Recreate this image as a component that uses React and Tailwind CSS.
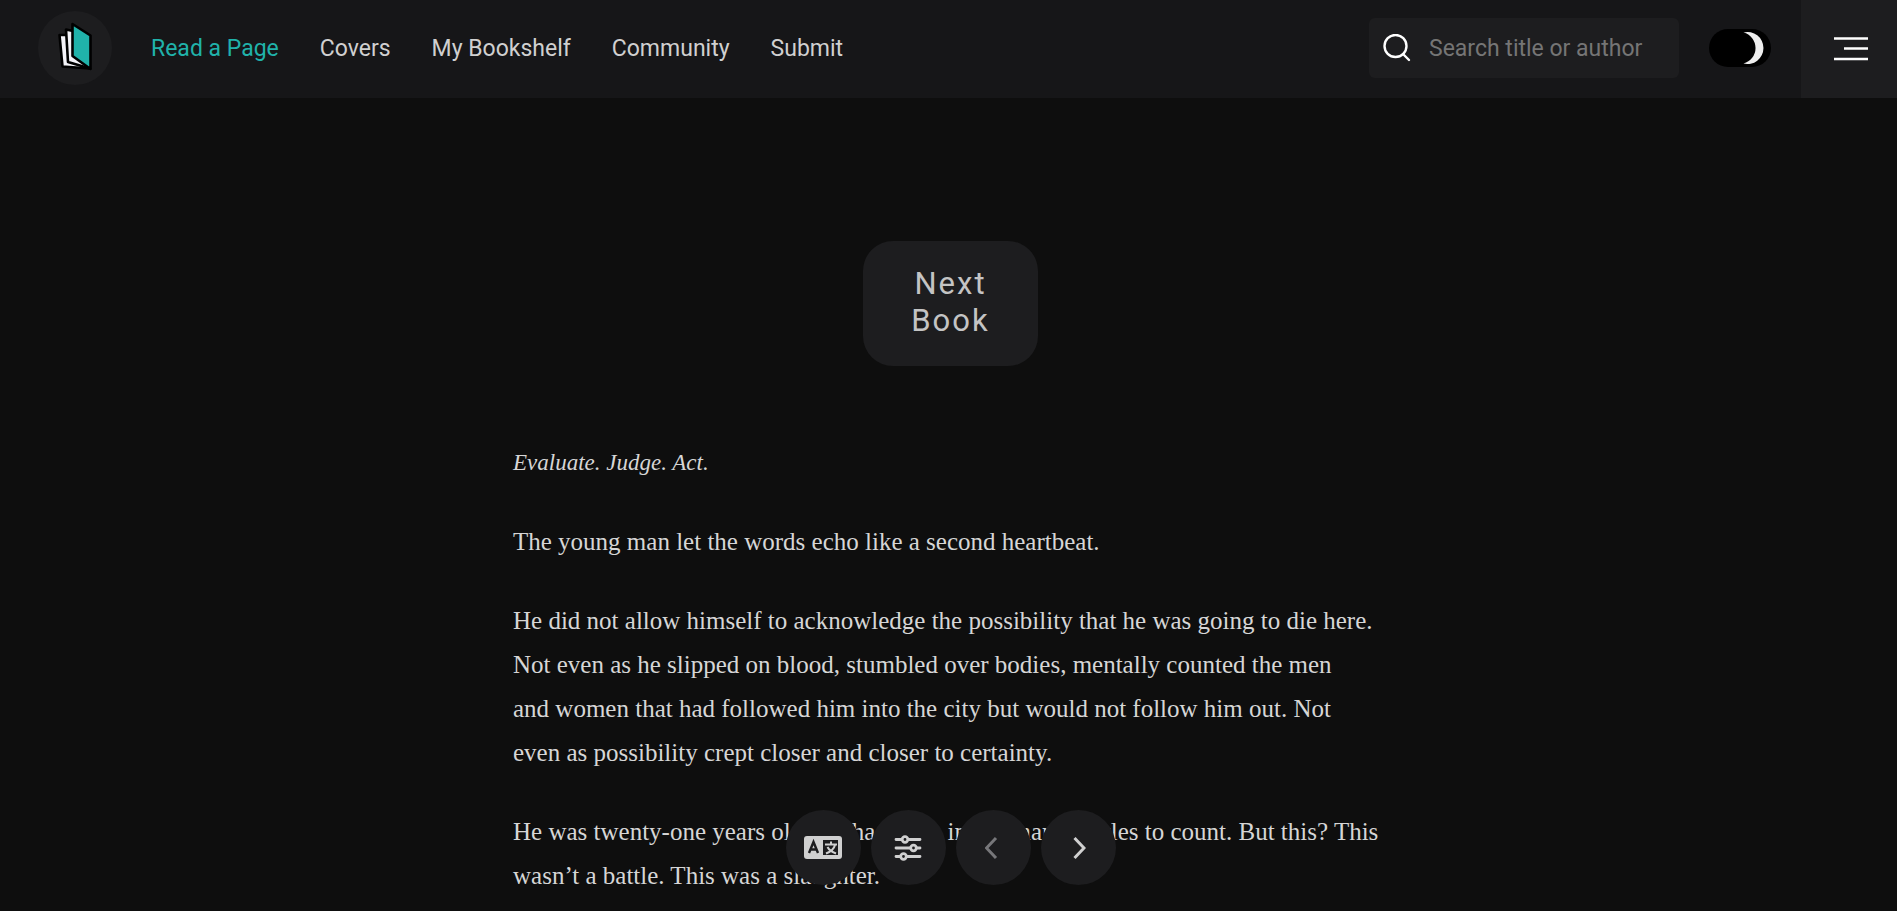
import { useState } from 'react';

const navLinks = [
    { label: 'Read a Page', active: true },
    { label: 'Covers' },
    { label: 'My Bookshelf' },
    { label: 'Community' },
    { label: 'Submit' },
];

const roundButton = 'flex size-[75px] items-center justify-center rounded-full bg-[#1d1d1f] text-[#d0d0d0]';

function Logo() {
    return (
        <svg className="h-[54px] w-9" viewBox="0 0 36 54" strokeLinejoin="round" stroke="#000" strokeWidth="2.6">
            <path d="M2.5 14 L10 14 L33 47.5 L5.5 45.5 Z" fill="#f4f3f8" />
            <path d="M9 8.5 L16 10 L33 47.5 L11 41 Z" fill="#f4f3f8" />
            <path d="M15.5 3 L33.5 14.5 V48 L15.5 35 Z" fill="#20b2aa" />
        </svg>
    );
}

function SearchBox() {
    return (
        <label className="flex h-[60px] w-[310px] items-center rounded-md bg-[#1d1d1f] pl-3.5">
            <svg className="size-7 shrink-0" viewBox="0 0 28 28" fill="none" stroke="#fff" strokeWidth="2.4" strokeLinecap="round">
                <circle cx="12.5" cy="12" r="11" />
                <path d="M20 20 L26 26" />
            </svg>
            <input
                aria-label="Search title or author"
                className="ml-[18px] h-full min-w-0 flex-1 bg-transparent outline-none placeholder:text-[#757575]"
                placeholder="Search title or author"
                type="text"
            />
        </label>
    );
}

function ThemeToggle() {
    const [isDark, setIsDark] = useState(true);

    return (
        <label className="ml-[30px] flex h-[38px] w-[62px] cursor-pointer items-center justify-end rounded-full bg-black pr-1.5">
            <input
                aria-label="Dark mode"
                checked={isDark}
                className="sr-only"
                onChange={(e) => setIsDark(e.target.checked)}
                type="checkbox"
            />
            <svg className="h-8 w-[22px]" viewBox="0 0 22 32" fill="#eee">
                <path d="M0.5 0.5 A16 16 0 1 1 0.5 31.5 A16 16 0 0 0 0.5 0.5 Z" />
            </svg>
        </label>
    );
}

function Header() {
    return (
        <header className="flex h-[98px] bg-[#161618] font-[Roboto,sans-serif] text-[23px] text-[#d0d0d0]">
            <div className="flex flex-1 items-center pr-[30px] pb-0.5 pl-[38px]">
                <a aria-label="Home" className="flex size-[74px] items-center justify-center rounded-full bg-[#1d1d1f]" href="#">
                    <Logo />
                </a>
                <nav className="mr-auto ml-[39px] flex gap-[41px] pt-0.5">
                    {navLinks.map((link) => (
                        <a className={link.active ? 'text-[#20b2aa]' : ''} href="#" key={link.label}>
                            {link.label}
                        </a>
                    ))}
                </nav>
                <SearchBox />
                <ThemeToggle />
            </div>
            <button aria-label="Menu" className="flex w-24 items-center justify-center bg-[#1d1d1f] pl-1" type="button">
                <svg className="h-[26px] w-[34px]" viewBox="0 0 34 26" stroke="#fff" strokeWidth="2.6">
                    <path d="M0 2.5 H34 M10 12.5 H34 M0 23 H34" />
                </svg>
            </button>
        </header>
    );
}

function LanguageIcon() {
    return (
        <svg className="h-[23px] w-[38px]" viewBox="0 0 38 23" fill="none" strokeWidth="2">
            <rect width="38" height="23" rx="3" fill="#d0d0d0" />
            <path d="M5 17 L9.5 6 L14 17 M6.5 13.5 H12.5" stroke="#1d1d1f" strokeWidth="2.4" />
            <rect x="19" y="4" width="15" height="15" fill="#1d1d1f" />
            <path d="M21 8.5 H33 M27 5.5 V8.5 M31 9 C30 13 26 16 22 17.5 M23.5 11 C25 14 28 16 32 17.5" stroke="#d0d0d0" />
        </svg>
    );
}

function SlidersIcon() {
    return (
        <svg className="h-[26px] w-7" viewBox="0 0 28 26" fill="#1d1d1f" stroke="#d0d0d0" strokeWidth="2.8" strokeLinecap="round">
            <path d="M2 4.5 H26 M2 13 H26 M2 21.5 H26" />
            <circle cx="11" cy="4.5" r="2.8" />
            <circle cx="19.5" cy="13" r="2.8" />
            <circle cx="9.5" cy="21.5" r="2.8" />
        </svg>
    );
}

function ReaderControls() {
    return (
        <div className="fixed inset-x-0 bottom-[26px] flex justify-center gap-2.5 pl-1">
            <button aria-label="Translate" className={roundButton} type="button">
                <LanguageIcon />
            </button>
            <button aria-label="Reading settings" className={roundButton} type="button">
                <SlidersIcon />
            </button>
            <button aria-label="Previous page" className={roundButton} disabled type="button">
                <svg className="h-6 w-4" viewBox="0 0 16 24" fill="none" stroke="#77777a" strokeWidth="3">
                    <path d="M11 2 L1.5 12 L11 22" />
                </svg>
            </button>
            <button aria-label="Next page" className={roundButton} type="button">
                <svg className="h-6 w-4" viewBox="0 0 16 24" fill="none" stroke="#d0d0d0" strokeWidth="3">
                    <path d="M4.5 2 L14 12 L4.5 22" />
                </svg>
            </button>
        </div>
    );
}

export default function App() {
    return (
        <div className="h-screen overflow-hidden bg-[#0e0e0e]">
            <Header />
            <main className="flex flex-col items-center pl-1">
                <button
                    className="mt-[143px] w-[175px] rounded-[30px] bg-[#1d1d1f] px-10 pt-6 pb-[27px] font-[Roboto,sans-serif] text-[31px] leading-[37px] tracking-[2px] text-[#c4c4c4]"
                    type="button"
                >
                    Next Book
                </button>
                <article className="mt-[75px] flex w-[875px] max-w-full flex-col gap-[35px] font-['Liberation_Serif',serif] text-[25px] leading-[44px] text-[#d6d6d6]">
                    <p className="text-[23px] italic">Evaluate. Judge. Act.</p>
                    <p>The young man let the words echo like a second heartbeat.</p>
                    <p>
                        He did not allow himself to acknowledge the possibility that he was going to die here.
                        <br />
                        Not even as he slipped on blood, stumbled over bodies, mentally counted the men
                        <br />
                        and women that had followed him into the city but would not follow him out. Not
                        <br />
                        even as possibility crept closer and closer to certainty.
                    </p>
                    <p>
                        He was twenty-one years old and had been in too many battles to count. But this? This
                        <br />
                        wasn’t a battle. This was a slaughter.
                    </p>
                </article>
            </main>
            <ReaderControls />
        </div>
    );
}
